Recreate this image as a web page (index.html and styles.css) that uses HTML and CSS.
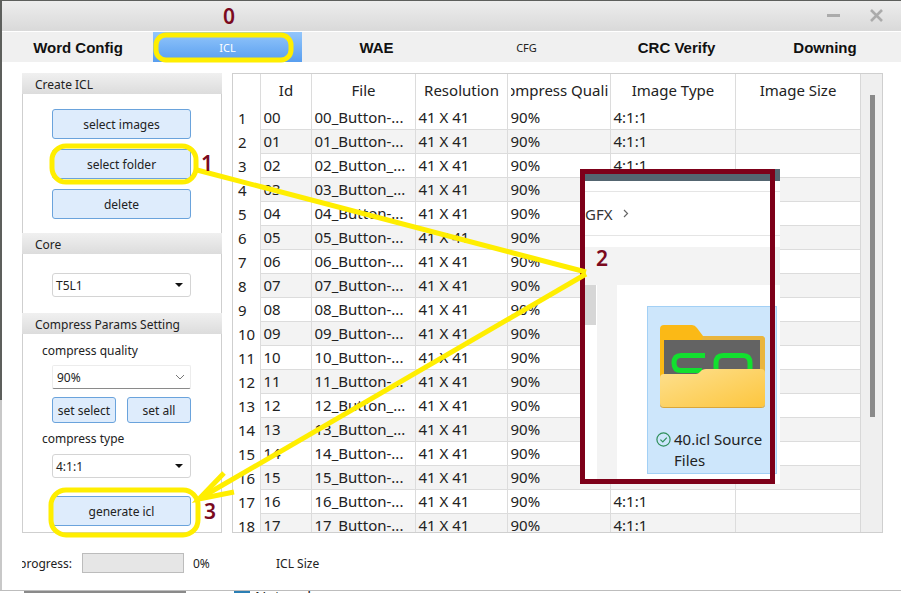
FILE: index.html
```html
<!DOCTYPE html>
<html lang="en">
<head>
  <meta charset="UTF-8" />
  <title>ICL generate steps</title>
  <link rel="stylesheet" href="styles.css">
</head>
<body>
  <!-- desktop peeking out under the window -->
  <div class="desktop">
    <div class="desk-bar"></div>
    <div class="desk-icon"></div>
    <div class="desk-text">Network</div>
  </div>

  <div class="window">
    <div class="titlebar">
      <svg class="win-btn" width="13" height="4" viewBox="0 0 13 4"><rect width="13" height="3" fill="#ababab"/></svg>
      <svg class="win-btn" width="13" height="13" viewBox="0 0 13 13"><path d="M1 1 L12 12 M12 1 L1 12" stroke="#ababab" stroke-width="2.6" fill="none"/></svg>
    </div>

    <div class="tabs">
      <div class="tab tab-big">Word Config</div>
      <div class="tab tab-active">ICL</div>
      <div class="tab tab-big">WAE</div>
      <div class="tab tab-small">CFG</div>
      <div class="tab tab-big">CRC Verify</div>
      <div class="tab tab-big">Downing</div>
    </div>

    <div class="main">
      <div class="panel">
        <div class="group-head">Create ICL</div>
        <div class="group group-create">
          <button class="btn">select images</button>
          <button class="btn">select folder</button>
          <button class="btn">delete</button>
        </div>
        <div class="group-head">Core</div>
        <div class="group group-core">
          <div class="combo combo-round">T5L1 <span class="arrow"></span></div>
        </div>
        <div class="group-head">Compress Params Setting</div>
        <div class="group group-params">
          <div class="label">compress quality</div>
          <div class="combo combo-flat">90%
            <svg width="10" height="6" viewBox="0 0 10 6"><path d="M1 1 L5 5 L9 1" stroke="#777" fill="none"/></svg>
          </div>
          <div class="btn-row">
            <button class="btn btn-short">set select</button>
            <button class="btn btn-short">set all</button>
          </div>
          <div class="label label-type">compress type</div>
          <div class="combo combo-round">4:1:1 <span class="arrow"></span></div>
          <button class="btn btn-generate">generate icl</button>
        </div>
      </div>

      <div class="table-box">
        <div class="table-clip">
          <table class="grid">
            <colgroup>
              <col class="c-num"><col class="c-id"><col class="c-file"><col class="c-res"><col class="c-qual"><col class="c-type"><col class="c-size">
            </colgroup>
            <thead>
              <tr>
                <th></th><th>Id</th><th>File</th><th>Resolution</th>
                <th><div class="clip-head">Compress Quality</div></th>
                <th>Image Type</th><th>Image Size</th>
              </tr>
            </thead>
            <tbody>
              <tr><th>1</th><td>00</td><td>00_Button-...</td><td>41 X 41</td><td>90%</td><td>4:1:1</td><td></td></tr>
              <tr><th>2</th><td>01</td><td>01_Button-...</td><td>41 X 41</td><td>90%</td><td>4:1:1</td><td></td></tr>
              <tr><th>3</th><td>02</td><td>02_Button_...</td><td>41 X 41</td><td>90%</td><td>4:1:1</td><td></td></tr>
              <tr><th>4</th><td>03</td><td>03_Button_...</td><td>41 X 41</td><td>90%</td><td>4:1:1</td><td></td></tr>
              <tr><th>5</th><td>04</td><td>04_Button-...</td><td>41 X 41</td><td>90%</td><td>4:1:1</td><td></td></tr>
              <tr><th>6</th><td>05</td><td>05_Button-...</td><td>41 X 41</td><td>90%</td><td>4:1:1</td><td></td></tr>
              <tr><th>7</th><td>06</td><td>06_Button-...</td><td>41 X 41</td><td>90%</td><td>4:1:1</td><td></td></tr>
              <tr><th>8</th><td>07</td><td>07_Button-...</td><td>41 X 41</td><td>90%</td><td>4:1:1</td><td></td></tr>
              <tr><th>9</th><td>08</td><td>08_Button-...</td><td>41 X 41</td><td>90%</td><td>4:1:1</td><td></td></tr>
              <tr><th>10</th><td>09</td><td>09_Button-...</td><td>41 X 41</td><td>90%</td><td>4:1:1</td><td></td></tr>
              <tr><th>11</th><td>10</td><td>10_Button-...</td><td>41 X 41</td><td>90%</td><td>4:1:1</td><td></td></tr>
              <tr><th>12</th><td>11</td><td>11_Button-...</td><td>41 X 41</td><td>90%</td><td>4:1:1</td><td></td></tr>
              <tr><th>13</th><td>12</td><td>12_Button_...</td><td>41 X 41</td><td>90%</td><td>4:1:1</td><td></td></tr>
              <tr><th>14</th><td>13</td><td>13_Button_...</td><td>41 X 41</td><td>90%</td><td>4:1:1</td><td></td></tr>
              <tr><th>15</th><td>14</td><td>14_Button-...</td><td>41 X 41</td><td>90%</td><td>4:1:1</td><td></td></tr>
              <tr><th>16</th><td>15</td><td>15_Button-...</td><td>41 X 41</td><td>90%</td><td>4:1:1</td><td></td></tr>
              <tr><th>17</th><td>16</td><td>16_Button-...</td><td>41 X 41</td><td>90%</td><td>4:1:1</td><td></td></tr>
              <tr><th>18</th><td>17</td><td>17_Button-...</td><td>41 X 41</td><td>90%</td><td>4:1:1</td><td></td></tr>
            </tbody>
          </table>
        </div>
        <div class="scroll"><div class="scroll-thumb"></div></div>
      </div>
    </div>

    <div class="footer">
      <div class="progress-label"><span>progress:</span></div>
      <div class="progress-bar"></div>
      <div class="progress-val">0%</div>
      <div class="icl-size">ICL Size</div>
    </div>
  </div>

  <!-- pasted explorer crop -->
  <div class="explorer">
    <div class="ex-stripe"></div>
    <div class="ex-path">
      <span>GFX</span>
      <svg class="ex-chev" width="6" height="9" viewBox="0 0 6 9"><path d="M1 1 L4.5 4.5 L1 8" stroke="#666" stroke-width="1.2" fill="none"/></svg>
    </div>
    <div class="ex-band"></div>
    <div class="ex-body">
      <div class="ex-scroll"><div class="ex-thumb"></div></div>
      <div class="ex-side"></div>
      <div class="ex-files">
        <div class="ex-tile">
          <svg class="ex-folder" width="105" height="83" viewBox="660 325 105 83">
            <defs>
              <linearGradient id="front" x1="0" y1="0" x2="1" y2="1">
                <stop offset="0" stop-color="#fde08f"/>
                <stop offset="1" stop-color="#fdc63e"/>
              </linearGradient>
            </defs>
            <path d="M664 325 H692 Q695 325 697 328 L703 336 H761 Q765 336 765 340 V380 H660 V329 Q660 325 664 325 Z" fill="#fbb916"/>
            <path d="M703 336 H761 Q765 336 765 340 V380 H690 Z" fill="#e9b53e"/>
            <rect x="664" y="340" width="96" height="36" fill="#636363"/>
            <path d="M705 355.5 H681 Q674 355.5 674 363 Q674 370.5 681 370.5 H702" stroke="#12e02f" stroke-width="5" fill="none"/>
            <path d="M716 372 V363 Q716 355.5 723 355.5 H743 Q750 355.5 750 363 V372" stroke="#12e02f" stroke-width="5" fill="none"/>
            <path d="M660 378 Q660 374 664 374 H696 Q698 374 700 372 Q702 369 706 369 H761 Q765 369 765 373 V403 Q765 407 761 407 H664 Q660 407 660 403 Z" fill="url(#front)"/>
            <path d="M660 403 Q660 407 664 407 H761 Q765 407 765 403 V405 Q765 408 761 408 H664 Q660 408 660 405 Z" fill="#d9a63a"/>
          </svg>
          <div class="ex-name">
            <svg class="ex-check" width="15" height="15" viewBox="0 0 15 15"><circle cx="7.5" cy="7.5" r="6.6" fill="none" stroke="#2f8f5b" stroke-width="1.2"/><path d="M4.4 7.6 L6.8 10 L10.8 5.6" fill="none" stroke="#2f8f5b" stroke-width="1.2"/></svg>
            <span>40.icl Source Files</span>
          </div>
        </div>
      </div>
    </div>
  </div>

  <!-- yellow marks drawn over the screenshot -->
  <svg class="marks" width="901" height="593" viewBox="0 0 901 593">
    <g fill="none" stroke="#ffee00" stroke-width="5">
      <rect x="156" y="35" width="135" height="25" rx="10"/>
      <rect x="52" y="146" width="144" height="36" rx="14"/>
      <rect x="51" y="490" width="147" height="45" rx="15"/>
      <path d="M197 170 L586 272"/>
      <path d="M586 274 L202 497"/>
      <path d="M224 473 L199 499 L234 492"/>
    </g>
  </svg>

  <span class="step step-0">0</span>
  <span class="step step-1">1</span>
  <span class="step step-2">2</span>
  <span class="step step-3">3</span>
</body>
</html>
```

FILE: styles.css
```css
html, body {
  margin: 0;
  padding: 0;
}
body {
  position: relative;
  width: 901px;
  height: 593px;
  overflow: hidden;
  background: linear-gradient(#5d5f5c 400px, #c8c8c8 400px);
  font-family: "Noto Sans", "Open Sans", sans-serif;
  color: #222;
}
.desktop {
  position: absolute;
  left: 0;
  right: 0;
  bottom: 0;
  height: 3px;
  box-sizing: border-box;
  overflow: hidden;
  background: #fff;
  border-top: 1px solid #bdbdbd;
}
.desk-bar {
  position: absolute;
  left: 24px;
  top: 0;
  width: 162px;
  height: 3px;
  background: #8a8a8a;
}
.desk-icon {
  position: absolute;
  left: 234px;
  top: 0;
  width: 16px;
  height: 3px;
  background: #2b7fb4;
}
.desk-text {
  position: absolute;
  left: 255px;
  top: -5px;
  font-size: 15px;
  line-height: 20px;
}
.window {
  position: relative;
  margin: 1px 0 0 2px;
  width: 899px;
  height: 589px;
  background: #fff;
  display: flex;
  flex-direction: column;
}
.titlebar {
  height: 31px;
  flex: none;
  background: linear-gradient(#ededed, #d9d9d9);
  border-bottom: 1px solid #fff;
  box-sizing: border-box;
  display: flex;
  justify-content: flex-end;
  align-items: center;
  gap: 30px;
  padding: 0 18px 1px 0;
}
.tabs {
  height: 30px;
  flex: none;
  display: grid;
  grid-template-columns: 150px 149px 149px 151px 149px 148px;
  background: #f0f0f0;
  padding-left: 1px;
}
.tab {
  display: flex;
  align-items: center;
  justify-content: center;
}
.tab-big {
  font-family: "Liberation Sans", sans-serif;
  font-weight: bold;
  font-size: 15px;
  color: #111;
}
.tab-small {
  font-size: 11px;
  color: #222;
}
.tab-active {
  background: linear-gradient(#93c6fb, #589eef);
  color: #fff;
  font-size: 11px;
}
.main {
  flex: 1;
  display: flex;
  gap: 10px;
  padding: 11px 0 0 20px;
}
.panel {
  width: 200px;
  height: 460px;
  box-sizing: border-box;
  border: 1px solid #cfcfcf;
  border-top: none;
  display: flex;
  flex-direction: column;
}
.group-head {
  height: 21px;
  line-height: 23px;
  margin: 0 -1px;
  padding-left: 13px;
  font-size: 12px;
  color: #222;
  background: linear-gradient(#f0f0f0, #dcdcdc);
}
.group {
  display: flex;
  flex-direction: column;
  padding: 0 30px 0 29px;
}
.group-create {
  padding-top: 15px;
  padding-bottom: 14px;
  gap: 10px;
  height: 139px;
  box-sizing: border-box;
}
.group-core {
  padding-top: 19px;
  height: 59px;
  box-sizing: border-box;
}
.group-params {
  flex: 1;
}
.btn {
  height: 30px;
  padding: 0;
  border: 1px solid #6aa3dc;
  border-radius: 3px;
  background: #deecfc;
  font-family: "Noto Sans", "Open Sans", sans-serif;
  font-size: 12px;
  color: #222;
}
.btn-row {
  display: flex;
  justify-content: space-between;
  margin-top: 8px;
}
.btn-short {
  width: 64px;
  height: 26px;
}
.btn-generate {
  margin-top: 18px;
}
.label {
  font-size: 12px;
  margin: 8px 0 6px -10px;
  height: 17px;
  line-height: 17px;
}
.label-type {
  margin-top: 7px;
  margin-bottom: 7px;
}
.combo {
  height: 24px;
  box-sizing: border-box;
  display: flex;
  align-items: center;
  justify-content: space-between;
  background: #fff;
  font-size: 12px;
  color: #222;
}
.combo-round {
  border: 1px solid #d4d4d4;
  border-radius: 3px;
  padding: 0 7px 0 3px;
}
.combo-flat {
  border: 1px solid #ececec;
  border-bottom: 1px solid #8a8a8a;
  border-radius: 2px;
  padding: 0 5px 0 4px;
}
.arrow {
  width: 0;
  height: 0;
  border-left: 4px solid transparent;
  border-right: 4px solid transparent;
  border-top: 4px solid #111;
}
.table-box {
  width: 651px;
  height: 460px;
  box-sizing: border-box;
  border: 1px solid #cfcfcf;
  display: flex;
}
.table-clip {
  width: 627px;
  overflow: hidden;
  border-right: 1px solid #d8d8d8;
}
.grid {
  border-collapse: collapse;
  table-layout: fixed;
  width: 627px;
  font-size: 15px;
}
.c-num { width: 27px; }
.c-id { width: 51px; }
.c-file { width: 104px; }
.c-res { width: 92px; }
.c-qual { width: 103px; }
.c-type { width: 125px; }
.c-size { width: 125px; }
.grid thead th {
  height: 31px;
  padding: 0 0 0 1px;
  box-sizing: border-box;
  font-weight: normal;
  text-align: center;
  border-right: 1px solid #dcdcdc;
}
.clip-head {
  display: flex;
  justify-content: center;
  overflow: hidden;
  white-space: nowrap;
  margin: 0 2px;
}
.grid tbody th {
  height: 24px;
  padding: 1px 0 0 5px;
  box-sizing: border-box;
  font-weight: normal;
  font-size: 15px;
  text-align: left;
  white-space: nowrap;
  border-right: 1px solid #dcdcdc;
}
.grid td {
  height: 24px;
  padding: 0 0 0 3px;
  box-sizing: border-box;
  white-space: nowrap;
  overflow: hidden;
  border-right: 1px solid #dcdcdc;
  border-bottom: 1px solid #dcdcdc;
}
.grid tbody tr:nth-child(even) td {
  background: #f3f3f3;
}
.scroll {
  flex: 1;
  background: #efefef;
  padding: 21px 7px 0 9px;
}
.scroll-thumb {
  height: 322px;
  background: #8a8a8a;
}
.footer {
  flex: 1;
  display: flex;
  align-items: center;
  font-size: 12px;
  padding: 3px 0 0 20px;
}
.progress-label {
  width: 50px;
  overflow: hidden;
  display: flex;
  justify-content: flex-end;
  margin-right: 10px;
}
.progress-bar {
  width: 100px;
  height: 18px;
  background: #e6e6e6;
  border: 1px solid #bcbcbc;
  margin-right: 9px;
}
.progress-val {
  width: 83px;
}
/* explorer crop pasted on top */
.explorer {
  position: absolute;
  left: 580px;
  top: 169px;
  width: 200px;
  height: 315px;
  box-sizing: border-box;
  background: #fff;
  display: flex;
  flex-direction: column;
}
.explorer::after {
  content: "";
  position: absolute;
  left: 0;
  top: 0;
  width: 195px;
  height: 315px;
  box-sizing: border-box;
  border: 5px solid #7d0019;
}
.ex-stripe {
  height: 12px;
  flex: none;
  background: #546570;
}
.ex-path {
  height: 45px;
  flex: none;
  box-sizing: border-box;
  border-top: 1px solid #e5e5e5;
  border-bottom: 1px solid #e5e5e5;
  margin-top: 10px;
  padding-left: 5px;
  display: flex;
  align-items: center;
  gap: 10px;
  font-size: 15px;
  color: #333;
}
.ex-band {
  height: 38px;
  flex: none;
  margin-top: 11px;
  background: #f3f3f3;
}
.ex-body {
  flex: 1;
  display: flex;
}
.ex-scroll {
  width: 17px;
  flex: none;
  padding-left: 4px;
  box-sizing: border-box;
}
.ex-thumb {
  width: 12px;
  height: 40px;
  background: #d6d6d6;
}
.ex-side {
  width: 20px;
  flex: none;
  background: #f3f3f3;
}
.ex-files {
  flex: 1;
  padding: 21px 3px 0 30px;
}
.ex-tile {
  box-sizing: border-box;
  height: 168px;
  background: #cde6fb;
  border: 1px solid #a3d0f5;
  padding: 18px 0 0 12px;
}
.ex-folder {
  display: block;
}
.ex-name {
  display: flex;
  gap: 3px;
  margin: 21px 0 0 -4px;
  font-size: 15px;
  line-height: 21px;
  color: #222;
}
.ex-check {
  flex: none;
  margin-top: 3px;
}
.marks {
  position: absolute;
  left: 0;
  top: 0;
}
.step {
  position: absolute;
  font-size: 21px;
  font-weight: 600;
  line-height: 24px;
  color: #7b0a1e;
}
.step-0 { left: 223px; top: 4px; }
.step-1 { left: 201px; top: 151px; }
.step-2 { left: 596px; top: 246px; }
.step-3 { left: 204px; top: 499px; }
```
